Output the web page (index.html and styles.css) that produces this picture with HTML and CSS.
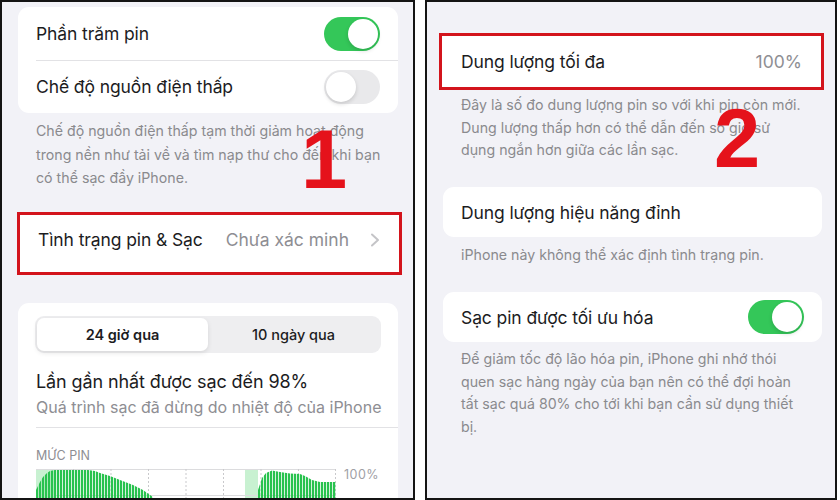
FILE: index.html
```html
<!DOCTYPE html>
<html lang="vi">
<head>
<meta charset="utf-8">
<link rel="stylesheet" href="styles.css">
</head>
<body>
<div class="screen screen-left">
  <div class="card">
    <div class="row"><span class="label">Phần trăm pin</span><span class="toggle on"><span class="knob"></span></span></div>
    <div class="row row-sep"><span class="label">Chế độ nguồn điện thấp</span><span class="toggle off"><span class="knob"></span></span></div>
  </div>
  <p class="note note-a">Chế độ nguồn điện thấp tạm thời giảm hoạt động<br>trong nền như tải về và tìm nạp thư cho đến khi bạn<br>có thể sạc đầy iPhone.</p>
  <div class="highlight hl-left">
    <span class="label">Tình trạng pin &amp; Sạc</span>
    <span class="value">Chưa xác minh</span>
    <svg class="chevron" width="10" height="14" viewBox="0 0 10 14"><path d="M2 1.5 L8 7 L2 12.5" fill="none" stroke="#c4c4c7" stroke-width="2" stroke-linecap="round" stroke-linejoin="round"/></svg>
  </div>
  <div class="card chart-card">
    <div class="segmented">
      <div class="seg active">24 giờ qua</div>
      <div class="seg">10 ngày qua</div>
    </div>
    <div class="title">Lần gần nhất được sạc đến 98%</div>
    <div class="subtitle">Quá trình sạc đã dừng do nhiệt độ của iPhone</div>
    <div class="divider"></div>
    <div class="caps">MỨC PIN</div>
    <div class="chart">
      <svg width="300" height="31" viewBox="0 0 300 31">
        <defs>
          <pattern id="bars" width="3" height="40" patternUnits="userSpaceOnUse">
            <rect x="0" y="0" width="2.2" height="40" fill="#28c24e"/>
          </pattern>
        </defs>
        <rect x="0" y="0" width="19" height="31" fill="#c8f1d1"/>
        <rect x="209" y="0" width="13" height="31" fill="#c8f1d1"/>
        <line x1="0" y1="0.5" x2="300" y2="0.5" stroke="#dcdcde" stroke-width="1"/>
        <line x1="0" y1="26.5" x2="300" y2="26.5" stroke="#dcdcde" stroke-width="1"/>
        <g stroke="#c9c9cc" stroke-width="1" stroke-dasharray="2 2">
          <line x1="37.5" y1="0" x2="37.5" y2="31"/>
          <line x1="75" y1="0" x2="75" y2="31"/>
          <line x1="112.5" y1="0" x2="112.5" y2="31"/>
          <line x1="150" y1="0" x2="150" y2="31"/>
          <line x1="187.5" y1="0" x2="187.5" y2="31"/>
          <line x1="225" y1="0" x2="225" y2="31"/>
          <line x1="262.5" y1="0" x2="262.5" y2="31"/>
          <line x1="299.5" y1="0" x2="299.5" y2="31"/>
        </g>
        <polygon fill="url(#bars)" points="0,31 0,21 4,13 7,8 11,4 14,2 19,1 52,1 59,2 64,4 74,7 84,11 97,16 107,21 114,26 117,28 117,31"/>
        <polygon fill="url(#bars)" points="222,31 222,21 226,9 230,4 236,1.5 244,3 254,4.5 264,5 269,7 276,11 284,13 300,13 300,31"/>
      </svg>
      <span class="axis">100%</span>
    </div>
  </div>
  <span class="step step-one">1</span>
</div>

<div class="screen screen-right">
  <div class="highlight hl-right">
    <span class="label">Dung lượng tối đa</span>
    <span class="value">100%</span>
  </div>
  <p class="note note-b">Đây là số đo dung lượng pin so với khi pin còn mới.<br>Dung lượng thấp hơn có thể dẫn đến số giờ sử<br>dụng ngắn hơn giữa các lần sạc.</p>
  <div class="card card-gap">
    <div class="row row-short"><span class="label">Dung lượng hiệu năng đỉnh</span></div>
  </div>
  <p class="note note-c">iPhone này không thể xác định tình trạng pin.</p>
  <div class="card card-gap">
    <div class="row row-short"><span class="label">Sạc pin được tối ưu hóa</span><span class="toggle on"><span class="knob"></span></span></div>
  </div>
  <p class="note note-d">Để giảm tốc độ lão hóa pin, iPhone ghi nhớ thói<br>quen sạc hàng ngày của bạn nên có thể đợi hoàn<br>tất sạc quá 80% cho tới khi bạn cần sử dụng thiết<br>bị.</p>
  <span class="step step-two">2</span>
</div>
</body>
</html>
```

FILE: styles.css
```css
* { box-sizing: border-box; }

html, body {
  margin: 0;
  padding: 0;
  background: #ffffff;
}

body {
  display: flex;
  gap: 10px;
  width: 840px;
  height: 500px;
  font-family: Inter, "Noto Sans", sans-serif;
  color: #1c1c1e;
}

.screen {
  position: relative;
  height: 500px;
  border: 2px solid #141414;
  background: #f2f2f7;
  overflow: hidden;
  display: flex;
  flex-direction: column;
}

.screen-left {
  width: 415px;
  padding: 5px 15px 0 16px;
}

.screen-right {
  width: 412px;
  padding: 31px 13px 0 16px;
}

.card {
  background: #ffffff;
  border-radius: 11px;
  flex: none;
}

.row {
  display: flex;
  align-items: center;
  justify-content: space-between;
  height: 53px;
  padding: 0 18px;
  position: relative;
}

.row-sep::before {
  content: "";
  position: absolute;
  top: 0;
  left: 18px;
  right: 0;
  height: 1px;
  background: #e2e2e5;
}

.row-short { height: 50px; }

.label {
  font-size: 17.5px;
  letter-spacing: -0.1px;
  color: #1c1c1e;
}

.value {
  font-size: 17.5px;
  color: #8e8e93;
  margin-left: auto;
}

.toggle {
  position: relative;
  width: 56px;
  height: 34px;
  border-radius: 17px;
  flex: none;
}

.toggle.on { background: #34c759; }
.toggle.off { background: #e9e9eb; }

.knob {
  position: absolute;
  top: 2px;
  width: 30px;
  height: 30px;
  border-radius: 50%;
  background: #ffffff;
  box-shadow: 0 2px 4px rgba(0, 0, 0, 0.15);
}

.toggle.on .knob { right: 2px; }
.toggle.off .knob { left: 2px; }

.note {
  margin: 6px 0 0;
  padding-left: 18px;
  font-size: 14.2px;
  line-height: 23.5px;
  color: #8a8a8e;
  white-space: nowrap;
}

.highlight {
  display: flex;
  align-items: center;
  background: #ffffff;
  border: 3px solid #d3141c;
  flex: none;
}

.hl-left {
  margin: 22px -4px 0 -1px;
  height: 63px;
  padding: 0 19px 7px 18px;
}

.hl-left .value { margin-right: 21px; }

.hl-right {
  margin: 0 -2px 0 -4px;
  height: 57px;
  padding: 0 19px 0 19px;
}

.chevron { flex: none; margin-top: 1px; }

.chart-card {
  margin-top: 28px;
  padding: 13px 0 0;
  flex: 1;
  border-bottom-left-radius: 0;
  border-bottom-right-radius: 0;
}

.segmented {
  display: flex;
  margin: 0 17px;
  height: 37px;
  padding: 2px;
  border-radius: 9px;
  background: #eeeef0;
}

.seg {
  flex: 1;
  display: flex;
  align-items: center;
  justify-content: center;
  font-size: 14.5px;
  font-weight: 500;
  color: #1c1c1e;
  border-radius: 7px;
}

.seg.active {
  background: #ffffff;
  font-weight: 600;
  box-shadow: 0 2px 5px rgba(0, 0, 0, 0.10);
}

.title {
  margin: 17px 18px 0;
  font-size: 18px;
  line-height: 24px;
  letter-spacing: -0.1px;
}

.subtitle {
  margin: 2px 18px 0;
  font-size: 16px;
  line-height: 22px;
  color: #8e8e93;
  white-space: nowrap;
}

.divider {
  margin: 9px 0 0 18px;
  height: 1px;
  background: #e2e2e5;
}

.caps {
  margin: 20px 18px 0;
  font-size: 12.5px;
  line-height: 16px;
  color: #8e8e93;
}

.chart {
  display: flex;
  align-items: flex-start;
  margin: 5px 0 0 18px;
  gap: 8px;
}

.chart svg { display: block; flex: none; }

.axis {
  font-size: 12.5px;
  line-height: 12px;
  color: #a0a0a5;
  letter-spacing: 0.5px;
}

.note-b { margin-top: 4px; line-height: 22.5px; }
.card-gap { margin-top: 25.5px; }
.note-c { margin-top: 7px; line-height: 22.5px; }
.note-d { margin-top: 6px; line-height: 22.5px; }

.step {
  position: absolute;
  font-family: "Liberation Sans", Arial, sans-serif;
  font-weight: 700;
  font-size: 83px;
  line-height: 1;
  color: #e5121b;
}

.step-one { left: 299px; top: 116px; }
.step-two { left: 287px; top: 95px; }
```
